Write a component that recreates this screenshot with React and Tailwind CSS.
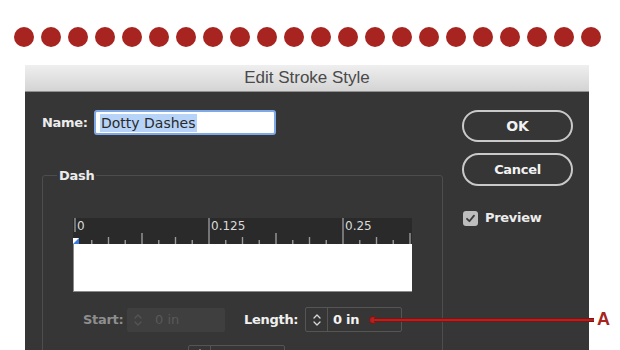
import React from "react";

const dots = Array.from({ length: 22 }, (_, i) => i);

function Chevrons({ color = "#d8d8d8" }) {
  return (
    <svg width="10" height="16" viewBox="0 0 10 16" fill="none">
      <path d="M2 6 L5 3 L8 6" stroke={color} strokeWidth="1.3" strokeLinecap="round" strokeLinejoin="round" />
      <path d="M2 10 L5 13 L8 10" stroke={color} strokeWidth="1.3" strokeLinecap="round" strokeLinejoin="round" />
    </svg>
  );
}

function Ruler() {
  const unit = 134;
  const step = unit / 8;
  const origin = 2;
  const ticks = [];
  for (let i = 1; i <= 20; i++) {
    const x = origin + i * step;
    if (x > 339) break;
    const m = i % 8;
    if (m === 0) continue;
    let h = 4;
    if (m === 4) h = 11;
    else if (m === 2 || m === 6) h = 7;
    ticks.push(<line key={i} x1={x} x2={x} y1={26 - h} y2={26} stroke="#9a9a9a" strokeWidth="1.4" />);
  }
  return (
    <svg width="339" height="26" viewBox="0 0 339 26" className="block">
      <rect width="339" height="26" fill="#2a2a2a" />
      <line x1={origin} x2={origin} y1="0" y2="14" stroke="#a8a8a8" strokeWidth="1.2" />
      <line x1={origin + unit} x2={origin + unit} y1="0" y2="26" stroke="#a8a8a8" strokeWidth="1.2" />
      <line x1={origin + 2 * unit} x2={origin + 2 * unit} y1="0" y2="26" stroke="#a8a8a8" strokeWidth="1.2" />
      {ticks}
      <text x={origin + 2} y="12" fill="#dadada" fontSize="12" fontFamily="DejaVu Sans, sans-serif">0</text>
      <text x={origin + unit + 2} y="12" fill="#dadada" fontSize="12" fontFamily="DejaVu Sans, sans-serif">0.125</text>
      <text x={origin + 2 * unit + 2} y="12" fill="#dadada" fontSize="12" fontFamily="DejaVu Sans, sans-serif">0.25</text>
      <path d="M0 20 L6 20 L6 26 L0 26 Z" fill="#ffffff" />
      <path d="M6 20 L6 26 L0 26 Z" fill="#3b7be0" />
    </svg>
  );
}

export default function App() {
  return (
    <div className="relative w-[620px] h-[350px] overflow-hidden bg-white" style={{ fontFamily: '"DejaVu Sans", sans-serif' }}>
      {/* dotted stroke sample */}
      <div className="flex gap-[7px] pl-[14px] pt-[27px]">
        {dots.map((i) => (
          <div key={i} className="w-[20px] h-[20px] rounded-full bg-[#a82420] shrink-0" />
        ))}
      </div>

      {/* dialog */}
      <div className="ml-[25px] mt-[18px] w-[564px] h-[300px] bg-[#363636] flex flex-col">
        <div className="h-[27px] shrink-0 flex items-center justify-center bg-gradient-to-b from-[#efefef] to-[#d4d4d4] border-b border-[#8f8f8f]">
          <span className="text-[17px] text-[#4a4a4a]" style={{ fontFamily: '"Liberation Sans", Arial, sans-serif' }}>
            Edit Stroke Style
          </span>
        </div>

        <div className="flex flex-1">
          {/* left column */}
          <div className="w-[437px] pl-[17px] pt-[18px] flex flex-col">
            <div className="flex items-center h-[25px]">
              <span className="w-[52px] text-[13px] font-bold text-[#ececec] tracking-[-0.3px]">Name:</span>
              <div className="w-[182px] h-[25px] bg-white border-2 border-[#7fa8e6] rounded-[3px] flex items-center pl-[4px]">
                <span className="bg-[#b7d3f7] text-[#2a2a2a] text-[14px] leading-[18px] px-[1px]">Dotty Dashes</span>
              </div>
            </div>

            <div className="relative mt-[40px] w-[401px] h-[200px] border border-[#4d4d4d] rounded-[3px]">
              <span className="absolute left-[14px] -top-[10px] px-[2px] bg-[#363636] text-[13px] font-bold text-[#ececec] tracking-[-0.3px]">
                Dash
              </span>
              <div className="ml-[30px] mt-[42px] w-[339px]">
                <Ruler />
                <div className="h-[48px] bg-white border-l border-b border-[#8a8a8a]" />
              </div>

              <div className="flex items-center ml-[40px] mt-[15px]">
                <span className="w-[44px] text-[13px] font-bold text-[#8e8e8e] tracking-[-0.3px]">Start:</span>
                <div className="w-[98px] h-[24px] bg-[#3f3f3f] rounded-[2px] flex items-center">
                  <div className="w-[22px] flex justify-center">
                    <Chevrons color="#555555" />
                  </div>
                  <span className="ml-[6px] text-[13px] text-[#595959]">0 in</span>
                </div>
                <span className="ml-[19px] w-[61px] text-[13px] font-bold text-[#f0f0f0] tracking-[-0.3px]">Length:</span>
                <div className="w-[97px] h-[25px] border border-[#555555] rounded-[2px] flex items-center">
                  <div className="w-[22px] h-full flex items-center justify-center border-r border-[#555555]">
                    <Chevrons />
                  </div>
                  <span className="ml-[5px] text-[13px] font-bold text-[#f4f4f4] tracking-[-0.3px]">0 in</span>
                </div>
              </div>

              <div className="ml-[145px] mt-[13px] w-[97px] h-[25px] border border-[#555555] rounded-[2px] flex">
                <div className="w-[22px] h-full flex items-start justify-center pt-[1px] border-r border-[#555555]">
                  <Chevrons />
                </div>
              </div>
            </div>
          </div>

          {/* right column */}
          <div className="w-[111px] pt-[18px] flex flex-col">
            <button className="h-[32px] w-[111px] rounded-full border-2 border-[#c9c9c9] bg-[#363636] text-[14px] font-bold text-[#f2f2f2]">
              OK
            </button>
            <button className="mt-[11px] h-[33px] w-[111px] rounded-full border-2 border-[#c9c9c9] bg-[#363636] text-[13px] font-bold text-[#f2f2f2] tracking-[-0.3px]">
              Cancel
            </button>
            <div className="mt-[25px] ml-[1px] flex items-center h-[14px]">
              <div className="w-[15px] h-[15px] rounded-[3px] bg-[#bdbdbd] flex items-center justify-center">
                <svg width="11" height="11" viewBox="0 0 11 11" fill="none">
                  <path d="M2 5.8 L4.4 8.2 L9 2.6" stroke="#3a3a3a" strokeWidth="1.8" strokeLinecap="round" strokeLinejoin="round" />
                </svg>
              </div>
              <span className="ml-[7px] text-[13px] font-bold text-[#ececec] tracking-[-0.3px]">Preview</span>
            </div>
          </div>
        </div>
      </div>

      {/* callout */}
      <div className="absolute left-[369px] top-[316px] w-[8px] h-[8px] rounded-full bg-[#b3221f] border border-[#7a1513]" />
      <div className="absolute left-[374px] top-[318px] w-[220px] h-[4px] bg-[#b3221f] border-y border-[#7a1513]" />
      <span
        className="absolute left-[597px] top-[306px] text-[18px] font-bold text-[#a82420]"
        style={{ fontFamily: '"Liberation Sans", Arial, sans-serif' }}
      >
        A
      </span>
    </div>
  );
}
